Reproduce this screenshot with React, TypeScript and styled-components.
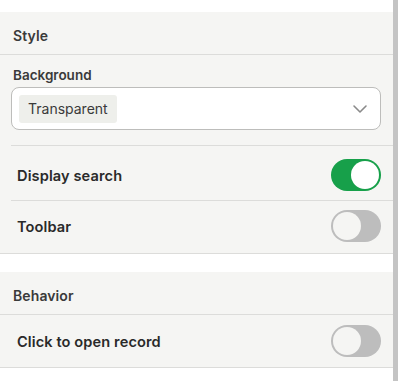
import React from 'react'
import styled, { createGlobalStyle } from 'styled-components'
import { ChevronDown } from 'lucide-react'

const GlobalStyle = createGlobalStyle`
    html, body {
        margin: 0;
        padding: 0;
        background: #ffffff;
        font-family: Inter, "Noto Sans", sans-serif;
    }
`

const Frame = styled.div`
    display: flex;
    width: 398px;
    height: 381px;
    overflow: hidden;
    background: #ffffff;
`

const Panel = styled.div`
    flex: 1;
    display: flex;
    flex-direction: column;
    padding-top: 12px;
    gap: 18px;
`

const ScrollTrack = styled.div`
    width: 5px;
    background: #c4c4c4;
`

const Section = styled.section`
    background: #f5f5f3;
    border-bottom: 1px solid #dcdcda;
`

const SectionHeader = styled.div`
    height: 43px;
    padding: 4px 13px 0;
    box-sizing: border-box;
    display: flex;
    align-items: center;
    border-bottom: 1px solid #dcdcda;
    font-size: 14px;
    font-weight: 600;
    color: #3a3a3a;
    letter-spacing: 0.1px;
`

const Field = styled.div`
    padding: 12px 12px 15px 11px;
`

const FieldLabel = styled.div`
    font-size: 13.5px;
    line-height: 17px;
    font-weight: 600;
    color: #3a3a3a;
    margin: 0 0 3px 2px;
`

const Select = styled.div`
    height: 43px;
    box-sizing: border-box;
    border: 1px solid #bdbdbb;
    border-radius: 8px;
    background: #ffffff;
    display: flex;
    align-items: center;
    justify-content: space-between;
    padding: 0 8px 0 7px;
    color: #8a8a8a;
`

const Tag = styled.span`
    height: 28px;
    display: inline-flex;
    align-items: center;
    padding: 0 9px;
    background: #eeefeb;
    border-radius: 3px;
    font-size: 14px;
    color: #3a3a3a;
`

const Row = styled.div<{ $top: number; $bottom: number; $inset?: boolean }>`
    margin-left: ${p => (p.$inset ? '11px' : '0')};
    border-top: ${p => (p.$inset ? '1px solid #dcdcda' : 'none')};
    padding: ${p => p.$top}px 12px ${p => p.$bottom}px ${p => (p.$inset ? '6px' : '17px')};
    display: flex;
    align-items: center;
    justify-content: space-between;
`

const RowLabel = styled.span`
    font-size: 14.6px;
    font-weight: 600;
    color: #2a2a2a;
    letter-spacing: 0.1px;
    padding-top: 2px;
`

const Switch = styled.div<{ $on: boolean }>`
    width: 50px;
    height: 32px;
    box-sizing: border-box;
    border-radius: 16px;
    padding: 2px;
    background: ${p => (p.$on ? '#17a04a' : '#bdbdbd')};
    display: flex;
    justify-content: ${p => (p.$on ? 'flex-end' : 'flex-start')};
`

const Knob = styled.div<{ $on: boolean }>`
    width: 28px;
    height: 28px;
    box-sizing: border-box;
    border-radius: 50%;
    background: ${p => (p.$on ? '#ffffff' : '#f5f5f3')};
`

const Toggle: React.FC<{ on: boolean }> = ({ on }) => (
    <Switch $on={on}>
        <Knob $on={on} />
    </Switch>
)

export default function App() {
    return (
        <Frame>
            <GlobalStyle />
            <Panel>
                <Section>
                    <SectionHeader>Style</SectionHeader>
                    <Field>
                        <FieldLabel>Background</FieldLabel>
                        <Select>
                            <Tag>Transparent</Tag>
                            <ChevronDown size={24} strokeWidth={1.6} />
                        </Select>
                    </Field>
                    <Row $inset $top={13} $bottom={9}>
                        <RowLabel>Display search</RowLabel>
                        <Toggle on />
                    </Row>
                    <Row $inset $top={9} $bottom={11}>
                        <RowLabel>Toolbar</RowLabel>
                        <Toggle on={false} />
                    </Row>
                </Section>
                <Section>
                    <SectionHeader>Behavior</SectionHeader>
                    <Row $top={10} $bottom={10}>
                        <RowLabel>Click to open record</RowLabel>
                        <Toggle on={false} />
                    </Row>
                </Section>
            </Panel>
            <ScrollTrack />
        </Frame>
    )
}
